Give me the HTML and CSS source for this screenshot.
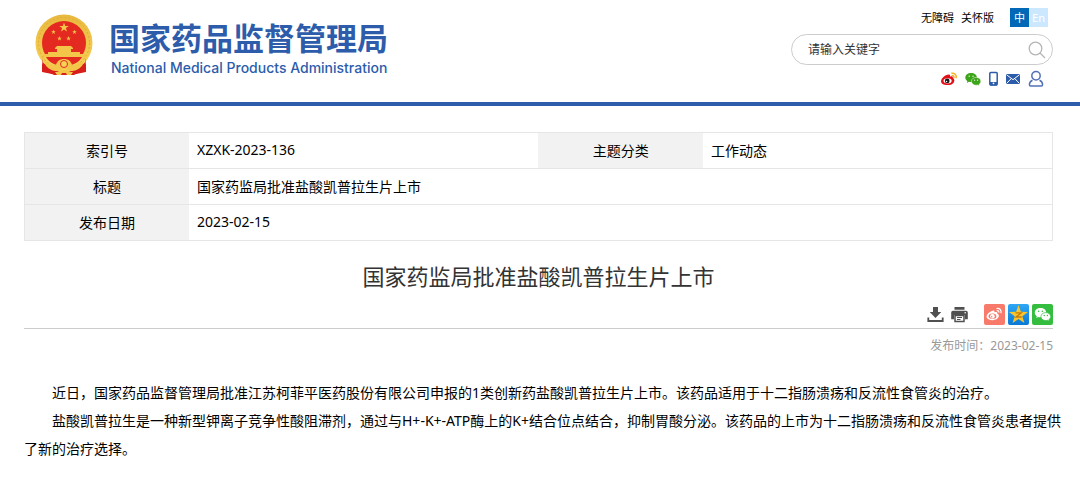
FILE: index.html
```html
<!DOCTYPE html>
<html lang="zh-CN">
<head>
<meta charset="utf-8">
<meta name="viewport" content="width=device-width, initial-scale=1">
<title>国家药监局批准盐酸凯普拉生片上市</title>
<link rel="stylesheet" href="styles.css">
</head>
<body>
<svg class="defs" aria-hidden="true">
  <defs>
    <path id="star" d="M0-10 2.4-3.2 9.5-3.1 3.8 1.2 5.9 8.1 0 4-5.9 8.1-3.8 1.2-9.5-3.1-2.4-3.2z"/>
    <linearGradient id="gold" x1="0" y1="0" x2="0" y2="1">
      <stop offset="0" stop-color="#e9b93f"/><stop offset="1" stop-color="#f7d257"/>
    </linearGradient>
    <linearGradient id="sky" x1="0" y1="0" x2="0" y2="1">
      <stop offset="0" stop-color="#2fa8f5"/><stop offset="1" stop-color="#0a78d6"/>
    </linearGradient>
  </defs>
</svg>
<header class="header">
  <a class="brand" href="#">
    <svg class="emblem" viewBox="0 0 58 62" aria-hidden="true">
      <path d="M9 41 7 58c3-1 5 1 8 1l4 2h20l4-2c3 0 5-2 8-1l-2-17z" fill="#d91f1b"/>
      <circle cx="29" cy="29" r="28.500" fill="url(#gold)"/>
      <circle cx="29" cy="29" r="25.500" fill="none" stroke="#e0ab36" stroke-width="1" stroke-dasharray="2 2"/>
      <circle cx="29" cy="29" r="22" fill="#e42a20"/>
      <g fill="#f3c64a">
        <use href="#star" transform="translate(29 13.500) scale(.5)"/>
        <use href="#star" transform="translate(18.500 18) scale(.24)"/>
        <use href="#star" transform="translate(39.500 18) scale(.24)"/>
        <use href="#star" transform="translate(24.500 24.500) scale(.24)"/>
        <use href="#star" transform="translate(33.500 24.500) scale(.24)"/>
        <path d="M22 32h14l2 2v1h-2v3h9v2h5v3H8v-3h5v-2h9v-3h-2v-1z"/>
      </g>
      <path d="M11 43h36c-3 5-7 7-11 8-2-3-12-3-14 0-4-1-8-3-11-8z" fill="#e42a20"/>
      <path d="M8 43c2 6 7 8 13 8 1-4 4-6 8-6s7 2 8 6c6 0 11-2 13-8l-3 9c-4 4-7 5-11 5-3 0-4-2-7-2s-4 2-7 2c-4 0-7-1-11-5z" fill="#f3c64a"/>
      <circle cx="29" cy="50" r="3.500" fill="#f7d257" stroke="#e42a20" stroke-width="1"/>
      <path d="m7 44 1 7c3 4 6 6 11 7l-2 2-10-2zM51 44l-1 7c-3 4-6 6-11 7l2 2 10-2z" fill="#d91f1b"/>
      <path d="M20 58c4 0 5-2 9-2s5 2 9 2l-2 3h-4l-1-2h-4l-1 2h-4z" fill="#f3c64a"/>
    </svg>
    <span class="brand-text">
      <span class="brand-cn">国家药品监督管理局</span>
      <span class="brand-en">National Medical Products Administration</span>
    </span>
  </a>
  <div class="tools">
    <nav class="top-links">
      <a href="#">无障碍</a>
      <a href="#">关怀版</a>
      <span class="lang"><a class="lang-cn" href="#">中</a><a class="lang-en" href="#">En</a></span>
    </nav>
    <form class="search">
      <input class="search-input" type="text" placeholder="请输入关键字" aria-label="请输入关键字">
      <button class="search-button" type="button" aria-label="搜索">
        <svg width="18" height="18" viewBox="0 0 18 18" fill="none" stroke="#b5b5b5" stroke-width="1.300"><circle cx="7.500" cy="7.500" r="6.300"/><path d="m12 12 5 5"/></svg>
      </button>
    </form>
    <nav class="social">
      <a href="#" aria-label="微博">
        <svg width="16" height="16" viewBox="0 0 17 16">
          <path d="M7.500 3.500c1.500-.5 2.500.2 2 2 2-.7 3.600-.2 3 1.400 3 1 2.400 7.600-5.300 7.600-8.500 0-9-5.500-3.700-9.500 1.500-1.200 3.500-1.800 4-1.500z" fill="#e2101a"/>
          <ellipse cx="7" cy="9.900" rx="4.300" ry="2.800" fill="#fff"/>
          <circle cx="6.600" cy="10" r="2.500" fill="#161616"/><circle cx="5.900" cy="10.600" r=".8" fill="#fff"/>
          <path d="M11 2c3.500-.8 6 2 4.900 5.300M11.300 4.300c1.700-.3 2.800 1 2.300 2.600" fill="none" stroke="#f5b22c" stroke-width="1.600"/>
        </svg>
      </a>
      <a href="#" aria-label="微信">
        <svg width="16" height="16" viewBox="0 0 17 16">
          <path d="M6.500 1.500C3 1.500.3 3.700.3 6.500c0 1.600.8 2.900 2.200 3.800L2 12.200l2.200-1.200c.8.200 1.500.3 2.300.3 3.500 0 6.200-2 6.200-4.900S10 1.500 6.500 1.500z" fill="#3ea51b"/>
          <path d="M11.800 6.300c-2.900 0-5 1.800-5 4.100s2.100 4.200 5 4.200c.6 0 1.200-.1 1.800-.3l1.700 1-.4-1.600c1.200-.8 1.900-2 1.900-3.300 0-2.300-2.100-4.100-5-4.100z" fill="#3ea51b" stroke="#fff" stroke-width=".5"/>
          <g fill="#fff"><circle cx="4.500" cy="5" r=".7"/><circle cx="8.500" cy="5" r=".7"/><circle cx="10.200" cy="9.200" r=".6"/><circle cx="13.400" cy="9.200" r=".6"/></g>
        </svg>
      </a>
      <a href="#" aria-label="移动端">
        <svg width="9" height="16" viewBox="0 0 9 16"><rect x=".8" y="1.500" width="7.400" height="12.500" rx="1" fill="#fff" stroke="#2d5cab" stroke-width="1.500"/><path d="M1 11h7v3.500H1z" fill="#2d5cab"/><circle cx="4.500" cy="12.300" r=".9" fill="#fff"/></svg>
      </a>
      <a href="#" aria-label="邮箱">
        <svg width="14" height="16" viewBox="0 0 14 16"><rect y="3" width="14" height="10" rx=".6" fill="#2d5cab"/><path d="m.5 3.700 6.500 5 6.500-5M.5 12.500l4.800-5M13.500 12.500l-4.800-5" fill="none" stroke="#fff" stroke-width="1"/></svg>
      </a>
      <a href="#" aria-label="个人中心">
        <svg width="16" height="18" viewBox="0 0 16 18" fill="none" stroke="#5272b5" stroke-width="1.500"><circle cx="8" cy="5.700" r="4.200"/><path d="M4.500 10.200C2.500 11 1.500 12.500 1.400 14.500c0 1 .3 1.500 1.300 1.500h10.600c1 0 1.300-.5 1.300-1.500-.1-2-1.100-3.500-3.100-4.300"/></svg>
      </a>
    </nav>
  </div>
</header>
<main class="page">
  <table class="info">
    <colgroup><col class="col-label"><col class="col-value"><col class="col-label"><col class="col-value"></colgroup>
    <tbody>
      <tr><th scope="row">索引号</th><td>XZXK-2023-136</td><th scope="row">主题分类</th><td>工作动态</td></tr>
      <tr><th scope="row">标题</th><td colspan="3">国家药监局批准盐酸凯普拉生片上市</td></tr>
      <tr><th scope="row">发布日期</th><td colspan="3">2023-02-15</td></tr>
    </tbody>
  </table>
  <article>
    <h1 class="title">国家药监局批准盐酸凯普拉生片上市</h1>
    <div class="actions">
      <button type="button" aria-label="下载">
        <svg width="17" height="17" viewBox="0 0 17 17" fill="#505050"><path d="M6 1h5v5h3.300L8.500 12 2.700 6H6z"/><path d="M1.300 11.500V15h14.400v-3.500" fill="none" stroke="#505050" stroke-width="1.800"/></svg>
      </button>
      <button type="button" aria-label="打印">
        <svg width="17" height="17" viewBox="0 0 17 17" fill="#505050"><path d="M3.500 1h10v2.700h-10zM2 4.700h13a1.800 1.800 0 0 1 1.800 1.800v6.700H14V9H3v4.200H.2V6.500A1.800 1.800 0 0 1 2 4.700z"/><path d="M4 9.500h9v6H4z" fill="#fff" stroke="#505050" stroke-width="1.500"/><path d="M6 11.500h5M6 13.500h3.500" stroke="#505050"/><circle cx="14.200" cy="6.800" r=".8" fill="#fff"/></svg>
      </button>
      <a class="share" href="#" aria-label="分享到微博">
        <svg width="21" height="21" viewBox="0 0 21 21"><rect width="21" height="21" rx="2" fill="#f87a6b"/><path d="M8.700 6.700c1.300-.4 2 .2 1.700 1.500 1.900-.6 3.400-.1 2.800 1.400 3.300 1.300 1.700 6.600-4.600 6.600-7 0-7.500-4.500-3.500-7.600 1.500-1.200 3-2 3.600-1.900z" fill="#fff"/><ellipse cx="8.500" cy="12.200" rx="3.900" ry="2.600" fill="#f87a6b"/><circle cx="8.400" cy="12.200" r="2.300" fill="#fff"/><circle cx="7.700" cy="12.700" r=".8" fill="#f87a6b"/><path d="M12.500 4.500c3.200-.7 5.300 1.800 4.400 4.700M12.700 6.600c1.500-.3 2.500.7 2.100 2.100" fill="none" stroke="#fff" stroke-width="1.200"/></svg>
      </a>
      <a class="share" href="#" aria-label="分享到QQ空间">
        <svg width="21" height="21" viewBox="0 0 21 21"><rect width="21" height="21" rx="2" fill="url(#sky)"/><use href="#star" transform="translate(10.500 11)" fill="#fbc62c"/><path d="M7.500 8.800h5.800L8 13h5.800" fill="none" stroke="#c77b08" stroke-width="1.300"/></svg>
      </a>
      <a class="share" href="#" aria-label="分享到微信">
        <svg width="21" height="21" viewBox="0 0 21 21"><rect width="21" height="21" rx="2" fill="#35bd3f"/><path d="M8.500 4C5.200 4 2.800 6 2.800 8.700c0 1.500.8 2.700 2 3.500L4.300 14l2-1c2.200.6 7.900-.2 7.900-4.600C14.200 6 11.800 4 8.500 4z" fill="#fff"/><path d="M13.800 8.600c-2.800 0-4.900 1.700-4.900 4s2.100 4 4.900 4l1.700-.3 1.700 1-.4-1.600c1.200-.8 1.900-1.800 1.900-3.100 0-2.300-2.100-4-4.900-4z" fill="#fff" stroke="#35bd3f" stroke-width=".7"/><g fill="#35bd3f"><circle cx="6.600" cy="7.200" r=".8"/><circle cx="10.300" cy="7.200" r=".8"/><circle cx="12.200" cy="11.500" r=".7"/><circle cx="15.400" cy="11.500" r=".7"/></g></svg>
      </a>
    </div>
    <p class="published">发布时间：<time datetime="2023-02-15">2023-02-15</time></p>
    <div class="content">
      <p>近日，国家药品监督管理局批准江苏柯菲平医药股份有限公司申报的1类创新药盐酸凯普拉生片上市。该药品适用于十二指肠溃疡和反流性食管炎的治疗。</p>
      <p>盐酸凯普拉生是一种新型钾离子竞争性酸阻滞剂，通过与H+-K+-ATP酶上的K+结合位点结合，抑制胃酸分泌。该药品的上市为十二指肠溃疡和反流性食管炎患者提供了新的治疗选择。</p>
    </div>
  </article>
</main>
</body>
</html>
```
FILE: styles.css
```css
* { box-sizing: border-box; }
body {
  margin: 0;
  background: #fff;
  color: #000;
  font-family: "Noto Sans", "Noto Sans CJK SC", sans-serif;
  font-size: 14px;
}
a { color: inherit; text-decoration: none; }
svg { display: block; }
button { padding: 0; border: 0; background: none; cursor: pointer; }
.defs { position: absolute; width: 0; height: 0; }

.header {
  display: flex;
  justify-content: space-between;
  align-items: flex-start;
  padding: 8px 27px 14px 35px;
  border-bottom: 4px solid #2d5cab;
}
.brand { display: flex; gap: 16px; padding-top: 6px; color: #2d5cab; }
.emblem { width: 58px; height: 62px; }
.brand-text { display: flex; flex-direction: column; padding-top: 5px; }
.brand-cn {
  font-family: "Noto Sans CJK SC", sans-serif;
  font-size: 31px;
  font-weight: 700;
  line-height: 36px;
}
.brand-en {
  padding-left: 2px;
  font-family: Inter, sans-serif;
  font-size: 14px;
  font-weight: 500;
  line-height: 26px;
}

.tools { display: flex; flex-direction: column; width: 262px; }
.top-links {
  display: flex;
  justify-content: flex-end;
  align-items: center;
  gap: 7px;
  padding-right: 5px;
  font-size: 11px;
  line-height: 19px;
}
.lang { display: flex; margin-left: 9px; color: #fff; text-align: center; }
.lang a { width: 19px; }
.lang-cn { background: #0068b7; }
.lang-en { background: #cce8ff; }
.search {
  display: flex;
  align-items: center;
  height: 31px;
  margin-top: 7px;
  padding: 0 6px 0 16px;
  border: 1px solid #ccc;
  border-radius: 16px;
}
.search-input {
  flex: 1;
  min-width: 0;
  padding: 0;
  border: 0;
  outline: 0;
  background: none;
  font: inherit;
  font-size: 12px;
}
.search-input::placeholder { color: #333; opacity: 1; }
.social {
  display: flex;
  justify-content: flex-end;
  align-items: center;
  gap: 8px;
  margin-top: 5px;
  padding-right: 9px;
}

.page { padding: 26px 27px 32px 24px; }
.info { width: 100%; border-collapse: collapse; table-layout: fixed; border: 1px solid #e6e6e6; }
.col-label { width: 16%; }
.col-value { width: 34%; }
.info tr { height: 36px; border-bottom: 1px solid #e6e6e6; }
.info th { padding: 0 0 2px; background: #f2f2f2; font-weight: 400; text-align: center; }
.info td { padding: 0 8px 2px; }

.title {
  margin: 19px 0 12px;
  color: #333;
  font-size: 22px;
  font-weight: 400;
  line-height: 32px;
  text-align: center;
}
.actions {
  display: flex;
  justify-content: flex-end;
  align-items: center;
  padding-bottom: 3px;
  border-bottom: 1px solid #ccc;
}
.actions button { margin-right: 7px; }
.share { margin-left: 3px; }
.actions button + .share { margin-left: 9px; }
.published {
  margin: 8px 0 24px;
  color: #999;
  font-size: 12px;
  line-height: 18px;
  text-align: right;
}
.content { margin-right: -12px; line-height: 28px; }
.content p { margin: 0; text-indent: 2em; }
```
